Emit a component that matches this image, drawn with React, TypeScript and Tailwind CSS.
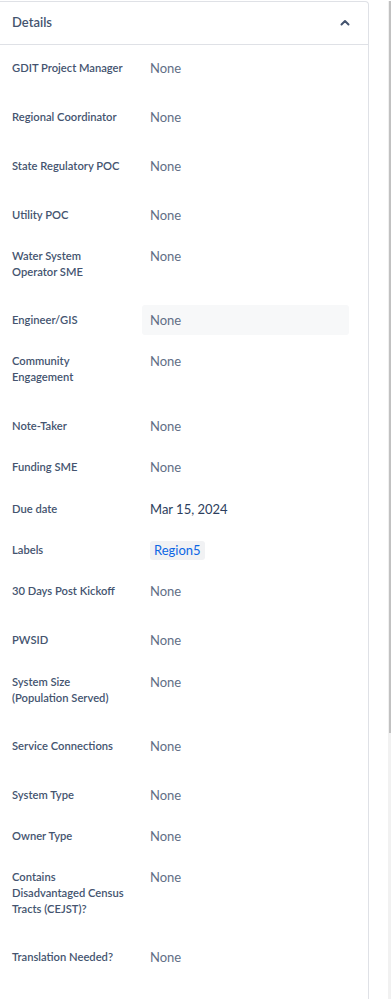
import React from "react";

type Row = { label: string[]; value: string; h: number; kind?: "none" | "date" | "tag"; hover?: boolean };

const rows: Row[] = [
  { label: ["GDIT Project Manager"], value: "None", h: 49 },
  { label: ["Regional Coordinator"], value: "None", h: 49 },
  { label: ["State Regulatory POC"], value: "None", h: 49 },
  { label: ["Utility POC"], value: "None", h: 41 },
  { label: ["Water System", "Operator SME"], value: "None", h: 64 },
  { label: ["Engineer/GIS"], value: "None", h: 41, hover: true },
  { label: ["Community", "Engagement"], value: "None", h: 65 },
  { label: ["Note-Taker"], value: "None", h: 41 },
  { label: ["Funding SME"], value: "None", h: 42 },
  { label: ["Due date"], value: "Mar 15, 2024", h: 41, kind: "date" },
  { label: ["Labels"], value: "Region5", h: 41, kind: "tag" },
  { label: ["30 Days Post Kickoff"], value: "None", h: 49 },
  { label: ["PWSID"], value: "None", h: 42 },
  { label: ["System Size", "(Population Served)"], value: "None", h: 64 },
  { label: ["Service Connections"], value: "None", h: 49 },
  { label: ["System Type"], value: "None", h: 41 },
  { label: ["Owner Type"], value: "None", h: 41 },
  { label: ["Contains", "Disadvantaged Census", "Tracts (CEJST)?"], value: "None", h: 80 },
  { label: ["Translation Needed?"], value: "None", h: 49 },
];

function Value({ r }: { r: Row }) {
  if (r.kind === "tag") {
    return (
      <div className="flex h-[30px] items-center px-2">
        <span className="rounded-[3px] bg-[#f1f2f4] px-1 text-[13px] leading-[19px] text-[#0c66e4]">{r.value}</span>
      </div>
    );
  }
  return (
    <div
      className={
        "flex h-[30px] items-center rounded-[3px] px-2 text-[13px] leading-[20px] " +
        (r.hover ? "bg-[#f7f8f9] " : "") +
        (r.kind === "date" ? "text-[#2c3e5d]" : "text-[#626f86]")
      }
    >
      {r.value}
    </div>
  );
}

export default function App() {
  return (
    <div
      className="flex min-h-[999px] w-[391px] bg-white pt-px"
      style={{ fontFamily: 'Lato, "Noto Sans", sans-serif' }}
    >
      <div className="w-[369px] shrink-0 rounded-tr-[4px] border-r border-t border-[#dfe1e6]">
        <div className="flex h-[43px] items-center justify-between border-b border-[#dfe1e6] pl-3 pr-[18px]">
          <span className="text-[13px] font-semibold text-[#44546f]">Details</span>
          <svg width="10" height="8" viewBox="0 0 10 8" fill="none">
            <path d="M1.5 5.5 L5 2 L8.5 5.5" stroke="#44546f" strokeWidth="2" strokeLinecap="round" strokeLinejoin="round" />
          </svg>
        </div>
        <div className="pt-2">
          {rows.map((r) => (
            <div key={r.value + r.label.join(" ")} className="flex items-start pl-3" style={{ height: r.h }}>
              <div className="w-[130px] shrink-0 pr-[8px] pt-[7px] text-[11.2px] font-semibold leading-[16px] text-[#44546f]">
                {r.label.map((l) => (
                  <div key={l} className="whitespace-nowrap">
                    {l}
                  </div>
                ))}
              </div>
              <div className="w-[207px]">
                <Value r={r} />
              </div>
            </div>
          ))}
        </div>
      </div>
      <div className="flex-1" />
      <div className="w-[3px] bg-[#f1f1f1]">
        <div className="ml-px h-[732px] w-[2px] bg-[#c1c1c1]" />
      </div>
    </div>
  );
}
